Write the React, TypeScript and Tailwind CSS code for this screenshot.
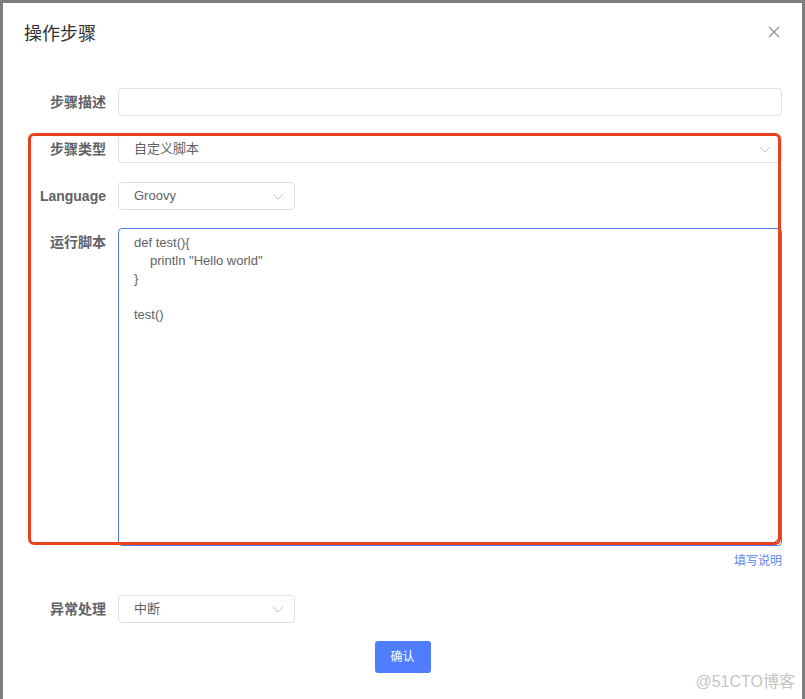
import React from "react";

const Chevron = () => (
  <svg width="12" height="7" viewBox="0 0 12 7" className="shrink-0">
    <polyline points="1,1 6,6 11,1" fill="none" stroke="#c0c4cc" strokeWidth="1" />
  </svg>
);

const Label = ({ children, bold }: { children: React.ReactNode; bold?: boolean }) => (
  <div
    className={`w-[115px] shrink-0 pr-[12px] text-right text-[14px] leading-[28px] text-[#606266] ${bold ? "font-bold" : "font-semibold"}`}
  >
    {children}
  </div>
);

const Select = ({ value, wide }: { value: string; wide?: boolean }) => (
  <div
    className={`${wide ? "flex-1" : "w-[177px]"} h-[28px] flex items-center justify-between rounded-[4px] border border-[#dcdfe6] bg-white pl-[15px] pr-[10px] text-[13px] text-[#606266]`}
  >
    <span>{value}</span>
    <Chevron />
  </div>
);

export default function App() {
  const font = { fontFamily: '"Liberation Sans", "Noto Sans CJK SC", sans-serif' };
  return (
    <div className="h-[699px] w-[805px] overflow-hidden bg-[#7f7f7f] pt-[3px] pl-[3px] relative" style={font}>
      <div className="relative w-[799px] h-[696px] bg-white">
        {/* header */}
        <div className="flex items-center justify-between pt-[19px] pl-[21px] pr-[22px]">
          <div className="text-[18px] leading-[24px] text-[#303133]">操作步骤</div>
          <svg width="12" height="12" viewBox="0 0 12 12" className="mt-[-4px]">
            <path d="M1 1 L11 11 M11 1 L1 11" stroke="#909399" strokeWidth="1.2" />
          </svg>
        </div>

        {/* form */}
        <div className="mt-[42px] pr-[20px] flex flex-col">
          <div className="flex mb-[19px]">
            <Label>步骤描述</Label>
            <div className="flex-1 h-[28px] rounded-[4px] border border-[#dcdfe6]" />
          </div>
          <div className="flex mb-[19px]">
            <Label>步骤类型</Label>
            <Select value="自定义脚本" wide />
          </div>
          <div className="flex mb-[18px]">
            <Label bold>Language</Label>
            <Select value="Groovy" />
          </div>
          <div className="flex">
            <Label>运行脚本</Label>
            <textarea
              readOnly
              className="flex-1 h-[318px] rounded-[4px] border border-[#4b7bf5] outline-none px-[15px] py-[5px] text-[13px] leading-[18px] text-[#606266] resize-y [tab-size:16px]"
              style={font}
              defaultValue={'def test(){\n\tprintln "Hello world"\n}\n\ntest()'}
            />
          </div>
          <div className="mt-[6px] flex justify-end text-[12px] leading-[18px] text-[#5a86f6]">填写说明</div>
          <div className="flex mt-[25px]">
            <Label>异常处理</Label>
            <Select value="中断" />
          </div>
          <div className="flex justify-center mt-[18px] pl-[20px]">
            <div className="w-[56px] h-[32px] rounded-[3px] bg-[#4f7dfd] text-white text-[12px] flex items-center justify-center">
              确认
            </div>
          </div>
        </div>

        {/* red annotation box */}
        <div className="absolute left-[25px] top-[130px] w-[753px] h-[412px] rounded-[6px] border-[3px] border-[#e8411e] pointer-events-none" />
      </div>

      {/* watermark */}
      <div className="absolute right-[10px] top-[670px] text-[16px] leading-[24px] text-[#c4c4c4]">@51CTO博客</div>
    </div>
  );
}
